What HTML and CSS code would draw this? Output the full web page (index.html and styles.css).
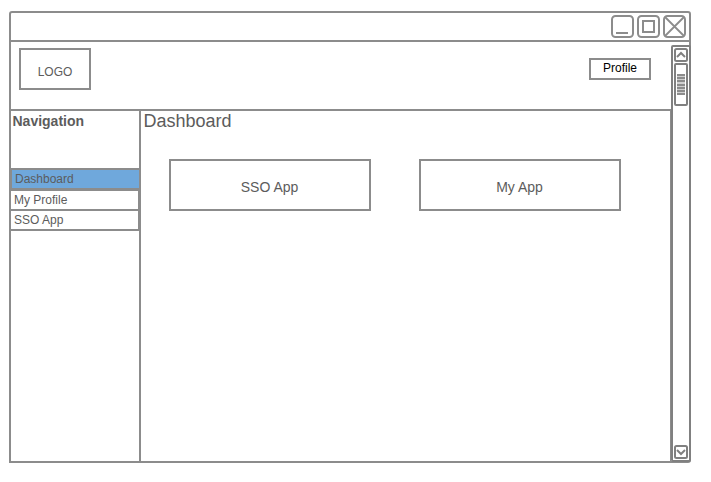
FILE: index.html
```html
<!DOCTYPE html>
<html lang="en">
<head>
<meta charset="utf-8">
<title>Dashboard</title>
<link rel="stylesheet" href="styles.css">
</head>
<body>
<div class="window">
  <div class="titlebar">
    <svg class="control" viewBox="0 0 24 24"><rect x="1" y="2" width="21" height="21" rx="3.5"/><path d="M5 19h12"/></svg>
    <svg class="control" viewBox="0 0 24 24"><rect x="1" y="2" width="21" height="21" rx="3.5"/><rect x="6" y="7" width="11" height="11"/></svg>
    <svg class="control" viewBox="0 0 24 24"><rect x="1" y="2" width="21" height="21" rx="3.5"/><path class="thin" d="M2 3l19 19M21 3l-19 19"/></svg>
  </div>
  <div class="body">
    <div class="page">
      <header class="header">
        <div class="logo">LOGO</div>
        <div class="profile">Profile</div>
      </header>
      <div class="columns">
        <nav class="sidebar">
          <h2 class="nav-title">Navigation</h2>
          <div class="item active">Dashboard</div>
          <div class="item">My Profile</div>
          <div class="item">SSO App</div>
        </nav>
        <main class="main">
          <h1 class="title">Dashboard</h1>
          <div class="apps">
            <div class="app">SSO App</div>
            <div class="app">My App</div>
          </div>
        </main>
      </div>
    </div>
    <div class="scrollbar">
      <svg class="arrow" viewBox="0 0 14 14"><rect x="1" y="1" width="12" height="12" rx="1.5"/><path d="M3 9l4-4 4 4"/></svg>
      <div class="thumb"><div class="grip"></div></div>
      <svg class="arrow down" viewBox="0 0 14 14"><rect x="1" y="1" width="12" height="12" rx="1.5"/><path d="M3 5l4 4 4-4"/></svg>
    </div>
  </div>
</div>
</body>
</html>
```
FILE: styles.css
```css
* {
  box-sizing: border-box;
}

body {
  margin: 0;
  padding: 11px 0 0 9px;
  background: #fff;
  color: #5c5c5c;
  font: 12px/14px "Liberation Sans", Arial, sans-serif;
}

.window {
  display: flex;
  flex-direction: column;
  width: 682px;
  height: 452px;
  border: 2px solid #8c8c8c;
  border-radius: 3px 3px 3px 0;
}

.titlebar {
  display: flex;
  justify-content: flex-end;
  gap: 2px;
  height: 29px;
  padding: 1px 2px 0 0;
  border-bottom: 2px solid #8c8c8c;
}

svg {
  display: block;
  fill: none;
  stroke: #8c8c8c;
  stroke-width: 2;
}

.control {
  width: 24px;
  height: 24px;
}

.thin {
  stroke-width: 1.8;
}

.body {
  display: flex;
  flex: 1;
}

.page {
  display: flex;
  flex-direction: column;
  width: 660px;
}

.header {
  display: flex;
  justify-content: space-between;
  align-items: flex-start;
  height: 69px;
  padding: 6px 20px 0 8px;
  border-bottom: 2px solid #8c8c8c;
}

.logo {
  width: 72px;
  height: 42px;
  padding-top: 15px;
  border: 2px solid #8c8c8c;
  text-align: center;
}

.profile {
  width: 62px;
  height: 22px;
  margin-top: 10px;
  padding-top: 1px;
  border: 2px solid #8c8c8c;
  color: #000;
  text-align: center;
}

.columns {
  display: flex;
  flex: 1;
  border-right: 1px solid #8c8c8c;
}

.sidebar {
  width: 130px;
  border-right: 2px solid #8c8c8c;
}

.nav-title {
  height: 57px;
  margin: 0;
  padding: 2px 0 0 1.5px;
  font-size: 14px;
  line-height: 16px;
}

.item {
  height: 22px;
  margin: -2px 0 0 -2px;
  padding: 2px 0 0 3px;
  border: 2px solid #8c8c8c;
  border-right-width: 1px;
}

.item.active {
  margin: 0 0 1px -1px;
  border-right: 0;
  background: #6fa8dc;
}

.main {
  flex: 1;
}

.title {
  height: 48px;
  margin: 0;
  padding-left: 2.5px;
  font-size: 18px;
  font-weight: 400;
  line-height: 20px;
}

.apps {
  display: flex;
  gap: 48px;
  padding-left: 28px;
}

.app {
  width: 202px;
  height: 52px;
  padding: 18px 1px 0 0;
  border: 2px solid #8c8c8c;
  font-size: 14px;
  line-height: 16px;
  text-align: center;
}

.scrollbar {
  display: flex;
  flex-direction: column;
  align-items: center;
  width: 20px;
  margin: 3px -2px -1px 0;
  padding: 1px 0;
  border: 2px solid #808080;
  border-radius: 2px;
}

.arrow {
  width: 14px;
  height: 14px;
  stroke: #808080;
}

.thumb {
  width: 14px;
  height: 43px;
  margin-top: 1px;
  padding: 9px 1px 0;
  border: 2px solid #808080;
  border-radius: 2px;
}

.grip {
  height: 21px;
  background: repeating-linear-gradient(#8c8c8c 0 2px, #d0d0d0 2px 3.17px);
}

.down {
  margin-top: auto;
}
```
